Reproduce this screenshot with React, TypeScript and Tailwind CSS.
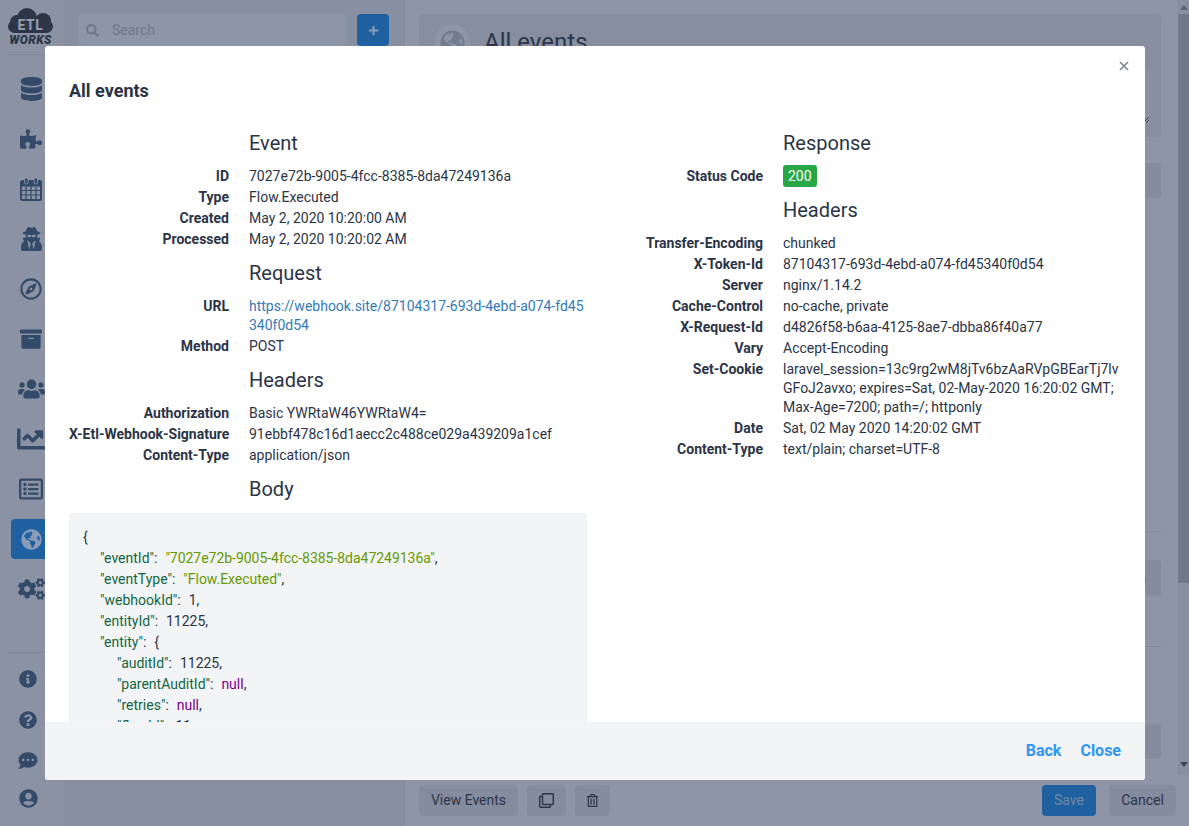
import type { ReactNode } from 'react'
import {
  FaArchive,
  FaChartLine,
  FaCogs,
  FaCommentDots,
  FaDatabase,
  FaGlobeAmericas,
  FaInfoCircle,
  FaPlus,
  FaPuzzlePiece,
  FaQuestionCircle,
  FaRegClone,
  FaRegCompass,
  FaRegListAlt,
  FaRegTrashAlt,
  FaSearch,
  FaUserCircle,
  FaUserSecret,
  FaUsers,
} from 'react-icons/fa'

function CalendarIcon({ className }: { className?: string }) {
  return (
    <svg viewBox="0 0 22 24" className={className} fill="none" stroke="currentColor">
      <rect x="1" y="4" width="20" height="19" rx="1.5" strokeWidth="2" />
      <path d="M1 5h20v4H1z" fill="currentColor" strokeWidth="1" />
      <path d="M1 13.500h20M1 18h20M6 9v14M11 9v14M16 9v14" strokeWidth="1.200" />
      <rect x="4.500" y="1" width="3.500" height="6" rx="1.700" fill="currentColor" stroke="#8a92a4" strokeWidth="1" />
      <rect x="14" y="1" width="3.500" height="6" rx="1.700" fill="currentColor" stroke="#8a92a4" strokeWidth="1" />
    </svg>
  )
}

function Logo() {
  return (
    <div className="relative h-[37px] w-[45px]">
      <svg viewBox="0 0 45 25" className="h-[25px] w-[45px] text-[#2c3648]" fill="currentColor">
        <circle cx="19" cy="10" r="10" />
        <circle cx="35" cy="13" r="8" />
        <circle cx="9" cy="14" r="7" />
        <rect x="0" y="12" width="45" height="13" rx="6.500" />
      </svg>
      <div className="absolute left-0 top-[10px] w-[45px] text-center text-[14px] font-bold leading-[14px] tracking-[0.6px] text-[#98a0b0]">
        ETL
      </div>
      <div className="absolute left-0 top-[26px] w-[45px] text-center text-[12px] font-black italic leading-[12px] tracking-[0.4px] text-[#2c3648]">
        WORKS
      </div>
    </div>
  )
}

function Sidebar() {
  return (
    <aside className="flex h-full w-[64px] shrink-0 flex-col pl-[7px]">
      <div className="flex h-[55px] w-[48px] flex-col border-b border-[#7d8596] pl-[1px] pt-[8px]">
        <Logo />
      </div>
      <div className="ml-[4px] mt-[14px] flex w-[40px] flex-col gap-[10px] text-[#334b68]">
        <div className="flex h-[40px] items-center justify-center">
          <FaDatabase className="h-[24px] w-[21px]" />
        </div>
        <div className="flex h-[40px] items-center justify-center">
          <FaPuzzlePiece className="h-[22px] w-[22px]" />
        </div>
        <div className="flex h-[40px] items-center justify-center">
          <CalendarIcon className="h-[24px] w-[22px]" />
        </div>
        <div className="flex h-[40px] items-center justify-center">
          <FaUserSecret className="h-[24px] w-[21px]" />
        </div>
        <div className="flex h-[40px] items-center justify-center">
          <FaRegCompass className="h-[22px] w-[22px]" />
        </div>
        <div className="flex h-[40px] items-center justify-center">
          <FaArchive className="h-[22px] w-[22px]" />
        </div>
        <div className="flex h-[40px] items-center justify-center">
          <FaUsers className="h-[24px] w-[27px]" />
        </div>
        <div className="flex h-[40px] items-center justify-center">
          <FaChartLine className="h-[28px] w-[28px]" />
        </div>
        <div className="flex h-[40px] items-center justify-center">
          <FaRegListAlt className="h-[24px] w-[24px]" />
        </div>
        <div className="flex h-[40px] items-center justify-center rounded bg-[#1f60a0] text-[#8a9db8]">
          <FaGlobeAmericas className="h-[21px] w-[21px]" />
        </div>
        <div className="flex h-[40px] items-center justify-center">
          <FaCogs className="h-[24px] w-[27px]" />
        </div>
      </div>
      <div className="mt-auto flex w-[42px] flex-col items-center border-t border-[#7d8596] pb-[18px] pt-[17px] text-[#334b68]">
        <div className="flex h-[40.500px] items-start justify-center">
          <FaInfoCircle className="h-[18px] w-[18px]" />
        </div>
        <div className="flex h-[40.500px] items-start justify-center">
          <FaQuestionCircle className="h-[18px] w-[18px]" />
        </div>
        <div className="flex h-[38px] items-start justify-center">
          <FaCommentDots className="h-[19px] w-[20px]" />
        </div>
        <FaUserCircle className="h-[19px] w-[19px]" />
      </div>
    </aside>
  )
}

function Background() {
  return (
    <div className="flex h-full bg-[#8a92a4] text-[14px] text-[#2c3648]">
      <Sidebar />
      <div className="flex h-full w-[341px] shrink-0 flex-col border-r-2 border-[#858d9f] bg-[#878fa1] px-[14px] pt-[14px]">
        <div className="flex gap-[10px]">
          <div className="flex h-[32px] flex-1 items-center rounded bg-[#8d96a8] px-[8px] text-[#6f788b]">
            <FaSearch className="h-[13px] w-[13px]" />
            <span className="ml-[13px]">Search</span>
          </div>
          <div className="flex h-[32px] w-[32px] items-center justify-center rounded bg-[#1f60a0] text-[#8a9db8]">
            <FaPlus className="h-[11px] w-[11px]" />
          </div>
        </div>
      </div>
      <div className="flex min-w-0 flex-1 flex-col bg-[#8d95a7]">
        <div className="flex h-[775px]">
          <div className="flex min-w-0 flex-1 flex-col pl-[14px] pr-[17px] pt-[14px]">
            <div className="h-[123px] rounded bg-[#868ea0] pl-[15px] pr-[10px] pt-[10px]">
              <div className="flex items-center gap-[14px]">
                <div className="flex h-[36px] w-[36px] items-center justify-center rounded-full bg-[#8d95a7] text-[#737c8f]">
                  <FaGlobeAmericas className="h-[25px] w-[25px]" />
                </div>
                <span className="text-[24px] leading-[36px]">All events</span>
              </div>
              <div className="relative mt-[10px] h-[55px] rounded bg-[#8a92a4]">
                <svg viewBox="0 0 8 8" className="absolute bottom-[1px] right-[1px] h-[8px] w-[8px] text-[#3c4557]" stroke="currentColor">
                  <path d="M1 7l6-6M4 7l3-3" />
                </svg>
              </div>
            </div>
            <div className="mt-[26px] h-[35px] shrink-0 rounded bg-[#848c9e]" />
            <div className="mt-[333px] border-t border-[#7f8799]" />
            <div className="relative mt-[28px] h-[36px] shrink-0 rounded bg-[#848c9e]">
              <div className="absolute right-[15px] top-[17px] h-[3px] w-[3px] rounded-full bg-[#4a607e]" />
            </div>
            <div className="mt-[50px] border-t border-[#7f8799]" />
            <div className="mt-[77px] h-[35px] shrink-0 rounded bg-[#848c9e]" />
          </div>
          <div className="flex w-[11px] shrink-0 flex-col items-center bg-[#878fa1]">
            <div className="flex h-[14px] w-full items-center justify-center text-[#5b6477]">
              <div className="h-0 w-0 border-x-[4px] border-b-[5px] border-x-transparent border-b-current" />
            </div>
            <div className="h-[569px] w-full bg-[#6f788b]" />
            <div className="mt-auto flex h-[18px] w-full items-center justify-center pb-[4px] text-[#3a4456]">
              <div className="h-0 w-0 border-x-[4px] border-t-[5px] border-x-transparent border-t-current" />
            </div>
          </div>
        </div>
        <div className="flex items-start pl-[14px] pr-[13px] pt-[10px]">
          <div className="flex h-[31px] w-[99px] items-center justify-center rounded bg-[#848c9e]">View Events</div>
          <div className="ml-[9px] flex h-[31px] w-[39px] items-center justify-center rounded bg-[#848c9e]">
            <FaRegClone className="h-[15px] w-[15px]" />
          </div>
          <div className="ml-[9px] flex h-[31px] w-[35px] items-center justify-center rounded bg-[#848c9e]">
            <FaRegTrashAlt className="h-[13px] w-[13px]" />
          </div>
          <div className="ml-auto flex h-[31px] w-[54px] items-center justify-center rounded bg-[#1f60a0] text-[#6f88a8]">Save</div>
          <div className="ml-[13px] flex h-[31px] w-[67px] items-center justify-center rounded bg-[#848c9e]">Cancel</div>
        </div>
      </div>
    </div>
  )
}

function Row({ label, wrap, children }: { label: string; wrap?: boolean; children: ReactNode }) {
  return (
    <div className="flex leading-[21px]">
      <div className="w-[160px] shrink-0 whitespace-nowrap text-right font-bold">{label}</div>
      <div className={wrap ? 'ml-[20px] min-w-0 flex-1 break-all py-px leading-[19px]' : 'ml-[20px] min-w-0 flex-1 break-all'}>
        {children}
      </div>
    </div>
  )
}

function Heading({ children }: { children: ReactNode }) {
  return <div className="ml-[180px] text-[20px] leading-[24px]">{children}</div>
}

function JsonKey({ children }: { children: string }) {
  return <span className="text-[#116644]">{children}</span>
}

function JsonString({ children }: { children: string }) {
  return <span className="ml-[1px] tracking-[-0.03px] text-[#669900]">{children}</span>
}

function JsonNull() {
  return <span className="ml-[1px] text-[#770088]">null</span>
}

function JsonNumber({ children }: { children: string }) {
  return <span className="ml-[1px]">{children}</span>
}

function Modal() {
  return (
    <div className="absolute left-[45px] top-[46px] flex h-[734px] w-[1100px] flex-col rounded-[3px] bg-white text-[14px] text-[#2b3446]">
      <button className="absolute right-[16px] top-[15px] text-[#7d8491]">
        <svg viewBox="0 0 10 10" className="h-[10px] w-[10px]" stroke="currentColor" strokeWidth="1.600">
          <path d="M1 1l8 8M9 1l-8 8" />
        </svg>
      </button>
      <div className="px-[24px] pt-[33px] text-[18px] font-bold leading-[24px]">All events</div>
      <div className="flex min-h-0 flex-1 gap-[16px] overflow-hidden px-[24px] pt-[28px]">
        <div className="flex w-[518px] shrink-0 flex-col">
          <Heading>Event</Heading>
          <div className="mt-[11px]">
            <Row label="ID">7027e72b-9005-4fcc-8385-8da47249136a</Row>
            <Row label="Type">Flow.Executed</Row>
            <Row label="Created">May 2, 2020 10:20:00 AM</Row>
            <Row label="Processed">May 2, 2020 10:20:02 AM</Row>
          </div>
          <div className="mt-[11px]">
            <Heading>Request</Heading>
          </div>
          <div className="mt-[11px]">
            <Row label="URL" wrap>
              <span className="text-[#337ab7]">https://webhook.site/87104317-693d-4ebd-a074-fd45340f0d54</span>
            </Row>
            <Row label="Method">POST</Row>
          </div>
          <div className="mt-[11px]">
            <Heading>Headers</Heading>
          </div>
          <div className="mt-[11px]">
            <Row label="Authorization">Basic YWRtaW46YWRtaW4=</Row>
            <Row label="X-Etl-Webhook-Signature">91ebbf478c16d1aecc2c488ce029a439209a1cef</Row>
            <Row label="Content-Type">application/json</Row>
          </div>
          <div className="mt-[11px]">
            <Heading>Body</Heading>
          </div>
          <pre className="mt-[12px] shrink-0 rounded-[3px] bg-[#f3f4f6] px-[14px] pt-[14px] font-[Roboto,sans-serif] text-[14px] leading-[21px]">
            <div>{'{'}</div>
            <div className="pl-[17px]">
              <div>
                <JsonKey>"eventId"</JsonKey>:{'  '}
                <JsonString>"7027e72b-9005-4fcc-8385-8da47249136a"</JsonString>,
              </div>
              <div>
                <JsonKey>"eventType"</JsonKey>:{'  '}
                <JsonString>"Flow.Executed"</JsonString>,
              </div>
              <div>
                <JsonKey>"webhookId"</JsonKey>:{'  '}
                <JsonNumber>1</JsonNumber>,
              </div>
              <div>
                <JsonKey>"entityId"</JsonKey>:{'  '}
                <JsonNumber>11225</JsonNumber>,
              </div>
              <div>
                <JsonKey>"entity"</JsonKey>:{'  '}
                <JsonNumber>{'{'}</JsonNumber>
              </div>
              <div className="pl-[17px]">
                <div>
                  <JsonKey>"auditId"</JsonKey>:{'  '}
                  <JsonNumber>11225</JsonNumber>,
                </div>
                <div>
                  <JsonKey>"parentAuditId"</JsonKey>:{'  '}
                  <JsonNull />,
                </div>
                <div>
                  <JsonKey>"retries"</JsonKey>:{'  '}
                  <JsonNull />,
                </div>
                <div>
                  <JsonKey>"flowId"</JsonKey>:{'  '}
                  <JsonNumber>11</JsonNumber>,
                </div>
              </div>
            </div>
          </pre>
        </div>
        <div className="flex w-[518px] shrink-0 flex-col">
          <Heading>Response</Heading>
          <div className="mt-[9px]">
            <div className="flex h-[23px] items-center">
              <div className="w-[160px] shrink-0 pt-[1px] text-right font-bold">Status Code</div>
              <span className="ml-[20px] rounded-[3px] bg-[#28a745] px-[5px] text-[14px] leading-[22px] text-white">200</span>
            </div>
          </div>
          <div className="mt-[11px]">
            <Heading>Headers</Heading>
          </div>
          <div className="mt-[11px]">
            <Row label="Transfer-Encoding">chunked</Row>
            <Row label="X-Token-Id">87104317-693d-4ebd-a074-fd45340f0d54</Row>
            <Row label="Server">nginx/1.14.2</Row>
            <Row label="Cache-Control">no-cache, private</Row>
            <Row label="X-Request-Id">d4826f58-b6aa-4125-8ae7-dbba86f40a77</Row>
            <Row label="Vary">Accept-Encoding</Row>
            <Row label="Set-Cookie" wrap>
              laravel_session=13c9rg2wM8jTv6bzAaRVpGBEarTj7lvGFoJ2avxo; expires=Sat, 02-May-2020 16:20:02 GMT; Max-Age=7200; path=/; httponly
            </Row>
            <Row label="Date">Sat, 02 May 2020 14:20:02 GMT</Row>
            <Row label="Content-Type">text/plain; charset=UTF-8</Row>
          </div>
        </div>
      </div>
      <div className="flex h-[58px] shrink-0 items-center justify-end gap-[19px] rounded-b-[3px] border-t border-[#eef0f3] bg-[#f3f4f6] px-[24px] pb-[2px] text-[16px] font-bold text-[#2f96f3]">
        <span>Back</span>
        <span>Close</span>
      </div>
    </div>
  )
}

export default function App() {
  return (
    <div className="relative h-[826px] w-[1189px] overflow-hidden font-[Roboto,sans-serif]">
      <Background />
      <Modal />
    </div>
  )
}
